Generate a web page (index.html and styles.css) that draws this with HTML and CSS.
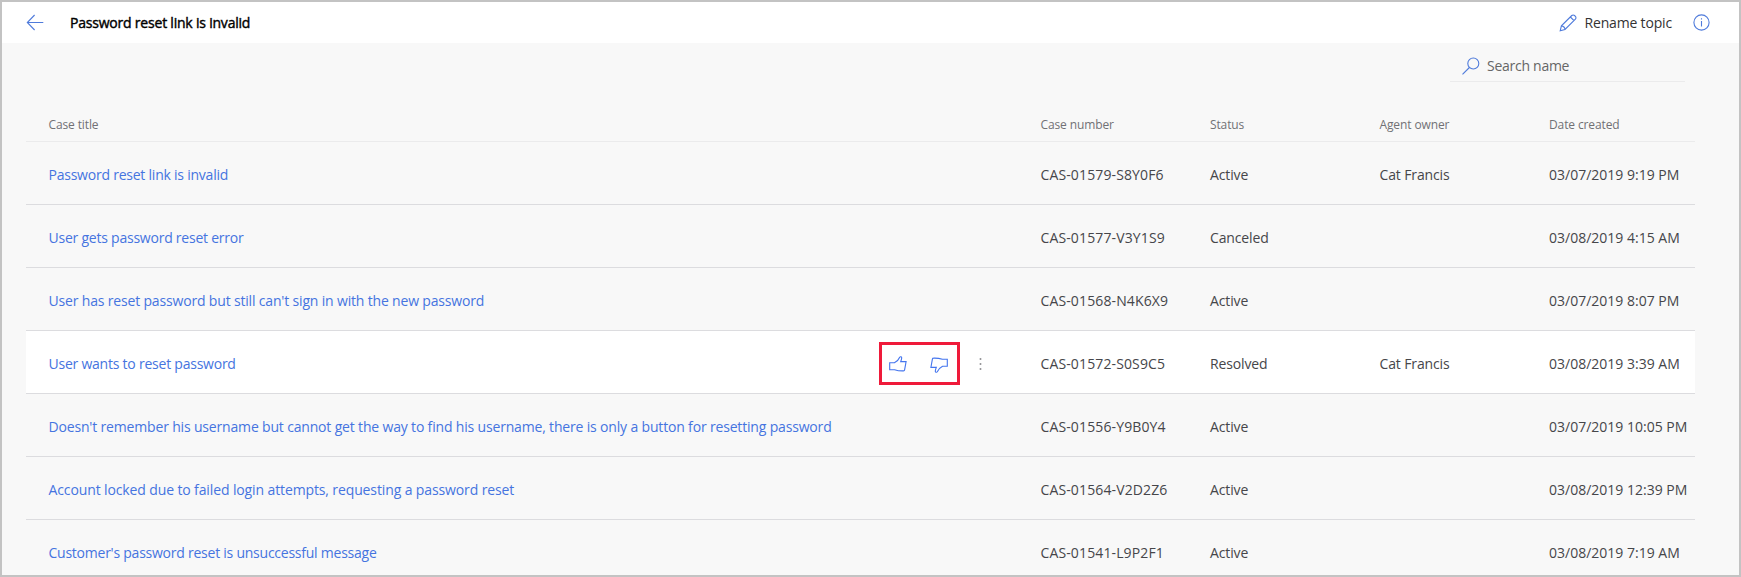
FILE: index.html
```
<!DOCTYPE html>
<html lang="en">
<head>
<meta charset="utf-8">
<title>Password reset link is invalid</title>
<link rel="stylesheet" href="styles.css">
</head>
<body>
<div class="frame">
  <header class="topbar">
    <svg class="back" width="18" height="17" viewBox="0 0 18 17"><path d="M17.300 8.500H1.300M8.600 1 1.300 8.500l7.300 7.500"/></svg>
    <h1 class="title">Password reset link is invalid</h1>
    <div class="rename">
      <svg width="18" height="18" viewBox="0 0 18 18"><path d="M1.200 16.800l1.200-4.900L12.800 1.500a1.900 1.900 0 0 1 2.700 0l.9.900a1.900 1.900 0 0 1 0 2.700L6 15.500zM11.400 3l3.600 3.600M2.400 11.900c2 .2 3.400 1.600 3.600 3.600"/></svg>
      <span>Rename topic</span>
    </div>
    <svg class="info" width="17" height="17" viewBox="0 0 17 17"><circle cx="8.500" cy="8.500" r="7.600"/><path d="M8.500 7v5.500M8.500 4.300v1.300"/></svg>
  </header>
  <main class="content">
    <div class="search">
      <svg width="18" height="18" viewBox="0 0 18 18"><circle cx="11.300" cy="6.500" r="5.500"/><path d="M7.400 10.500L.5 17.400"/></svg>
      <span>Search name</span>
    </div>
    <div class="table">
      <div class="row head"><span>Case title</span><span></span><span>Case number</span><span>Status</span><span>Agent owner</span><span>Date created</span></div>
      <div class="row"><a class="link">Password reset link is invalid</a><span></span><span class="num">CAS-01579-S8Y0F6</span><span class="word">Active</span><span class="word">Cat Francis</span><span>03/07/2019 9:19 PM</span></div>
      <div class="row"><a class="link">User gets password reset error</a><span></span><span class="num">CAS-01577-V3Y1S9</span><span class="word">Canceled</span><span></span><span>03/08/2019 4:15 AM</span></div>
      <div class="row"><a class="link">User has reset password but still can't sign in with the new password</a><span></span><span class="num">CAS-01568-N4K6X9</span><span class="word">Active</span><span></span><span>03/07/2019 8:07 PM</span></div>
      <div class="row active"><a class="link">User wants to reset password</a>
        <div class="actions">
          <div class="callout">
            <svg width="18" height="16" viewBox="0 0 18 16"><path d="M.7 6.700h4.700C8 5.400 9.800 3.500 10.700 1.200c.6-.9 2.100-.5 2 .8-.1 1.300-.5 2.400-1 3.600h5.400l-1.500 8.300c-.1.700-.5 1-1.100 1-3.200.1-6-.2-8.900-1.200H.7z"/></svg>
            <svg width="18" height="16" viewBox="0 0 18 16"><path d="M17.300 9.300h-4.700C10 10.600 8.200 12.500 7.300 14.800c-.6.900-2.100.5-2-.8.100-1.300.5-2.400 1-3.600H.9l1.500-8.300c.1-.7.5-1 1.100-1 3.200-.1 6 .2 8.900 1.200h4.900z"/></svg>
          </div>
          <svg class="more" width="3" height="12" viewBox="0 0 3 12"><path d="M.7.200h1.600v1.600H.7zM.7 5.200h1.600v1.600H.7zM.7 10.200h1.600v1.600H.7z"/></svg>
        </div>
        <span class="num">CAS-01572-S0S9C5</span><span class="word">Resolved</span><span class="word">Cat Francis</span><span>03/08/2019 3:39 AM</span></div>
      <div class="row"><a class="link">Doesn't remember his username but cannot get the way to find his username, there is only a button for resetting password</a><span></span><span class="num">CAS-01556-Y9B0Y4</span><span class="word">Active</span><span></span><span>03/07/2019 10:05 PM</span></div>
      <div class="row"><a class="link loose">Account locked due to failed login attempts, requesting a password reset</a><span></span><span class="num">CAS-01564-V2D2Z6</span><span class="word">Active</span><span></span><span>03/08/2019 12:39 PM</span></div>
      <div class="row"><a class="link tight">Customer's password reset is unsuccessful message</a><span></span><span class="num">CAS-01541-L9P2F1</span><span class="word">Active</span><span></span><span>03/08/2019 7:19 AM</span></div>
    </div>
  </main>
</div>
</body>
</html>
```
FILE: styles.css
```
* { box-sizing: border-box; }
body {
  margin: 0;
  font: 14px/20px "Open Sans", "Noto Sans", sans-serif;
  color: #46464a;
}
svg {
  flex: none;
  fill: none;
  stroke: #4f7bdb;
  stroke-width: 1.1;
}
.frame {
  height: 577px;
  overflow: hidden;
  border: 2px solid #c3c3c3;
  background: #f8f8f8;
}
.topbar {
  display: flex;
  align-items: center;
  height: 41px;
  padding: 0 41px 0 24px;
  background: #fff;
}
.title {
  margin: 0 auto 0 26px;
  font: inherit;
  letter-spacing: -.21px;
  color: #000;
  -webkit-text-stroke: .4px #000;
}
.rename {
  display: flex;
  align-items: center;
  gap: 7px;
  margin-right: 21px;
  letter-spacing: -.17px;
  color: #333;
}
.info { margin-right: -12px; }
.content { padding-left: 24px; }
.search {
  display: flex;
  align-items: center;
  gap: 7px;
  width: 235px;
  height: 39px;
  margin-left: 1424px;
  padding: 7px 0 0 12px;
  border-bottom: 1px solid #ebebec;
  letter-spacing: -.27px;
  color: #666;
}
.table { width: 1669px; }
.row {
  display: grid;
  grid-template-columns: 830px 162px 169.500px 169.500px 169.500px 1fr;
  align-items: center;
  height: 63px;
  padding: 3px 0 0 22.500px;
  border-bottom: 1px solid #dcdcdf;
  white-space: nowrap;
}
.head {
  height: 60px;
  padding-top: 27px;
  border-color: #ebebec;
  font-size: 12px;
  letter-spacing: -.12px;
  color: #717175;
}
.active { background: #fff; }
.link { letter-spacing: -.17px; color: #4574e0; }
.row:nth-child(2) .link, .row:nth-child(3) .link, .active .link { letter-spacing: -.23px; }
.loose { letter-spacing: -.12px; }
.tight { letter-spacing: -.24px; }
.num { letter-spacing: .13px; }
.word { letter-spacing: -.13px; }
.actions {
  display: flex;
  align-items: center;
  height: 43px;
}
.actions svg { stroke: #4475ee; }
.callout {
  display: flex;
  align-items: center;
  justify-content: space-between;
  width: 81px;
  height: 43px;
  padding: 0 9px 0 7px;
  border: 3px solid #ef1a3a;
}
.callout svg:last-child { margin-top: 3px; }
.actions .more { margin-left: 19px; fill: #77777b; stroke: none; }
```
